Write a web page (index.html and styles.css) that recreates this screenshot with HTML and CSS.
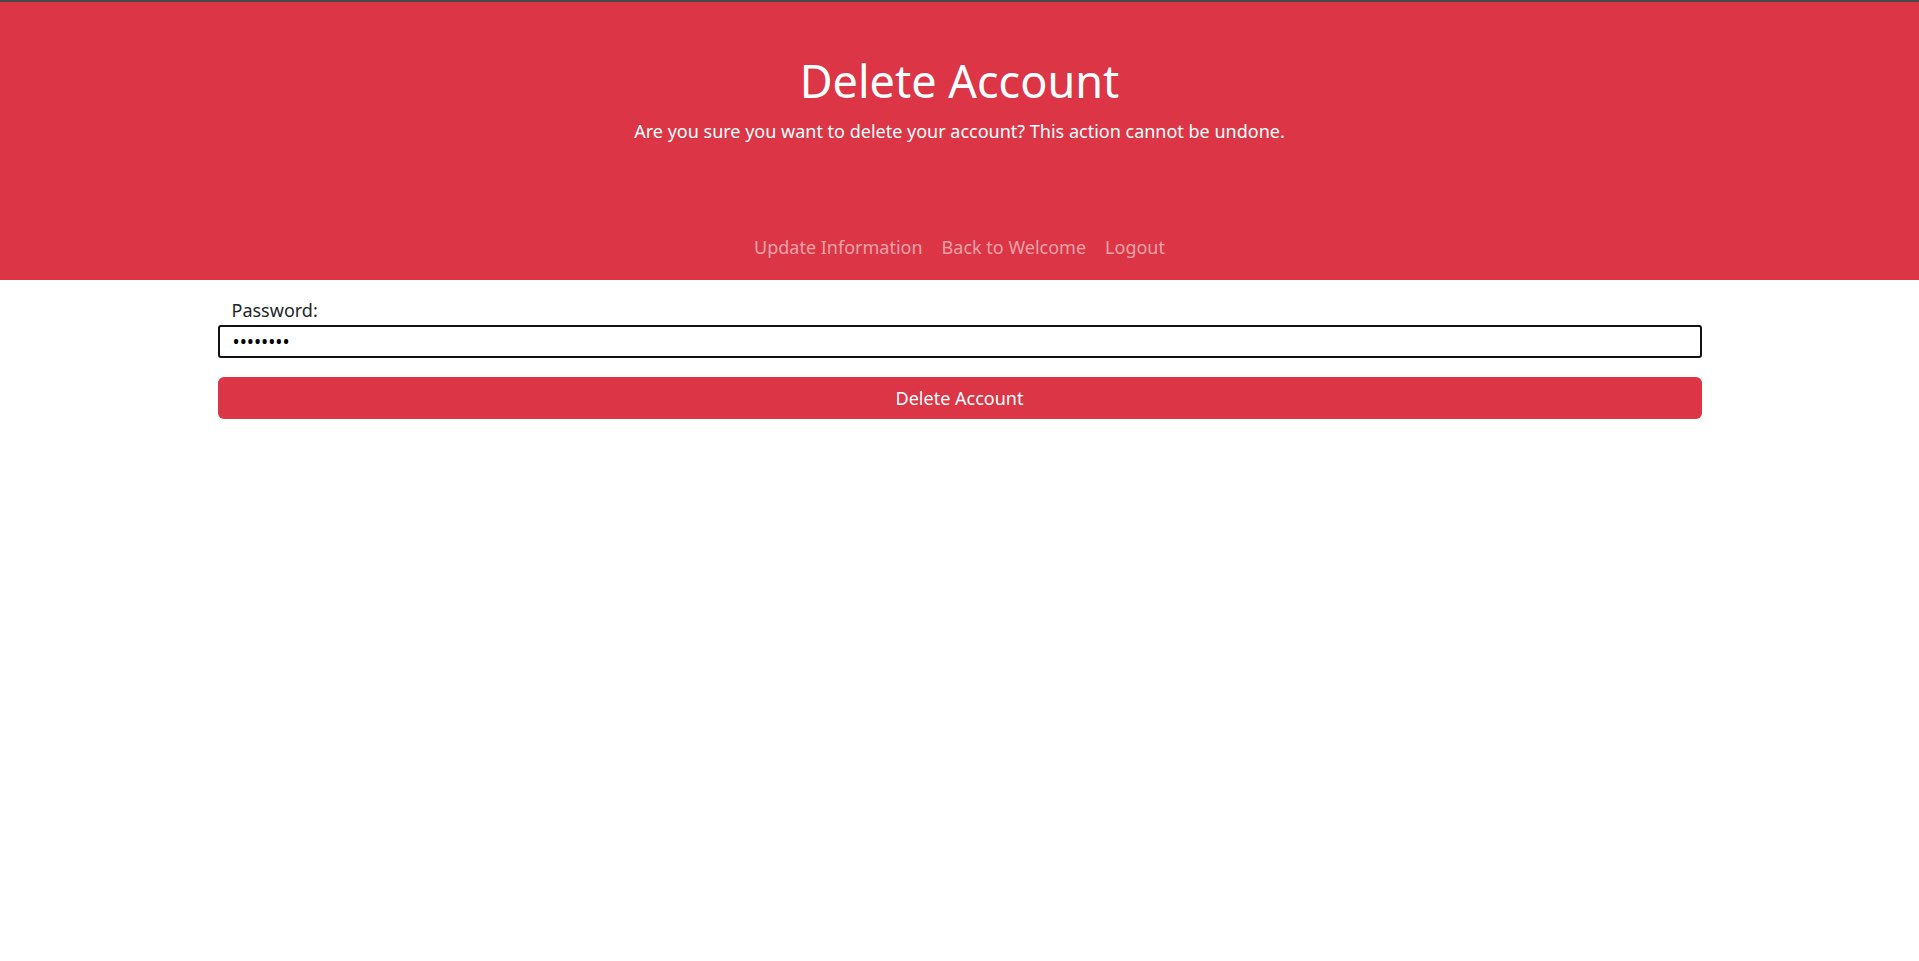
FILE: index.html
```html
<!DOCTYPE html>
<html lang="en">
<head>
<meta charset="utf-8">
<title>Delete Account</title>
<link rel="stylesheet" href="styles.css">
</head>
<body>
<header class="hero">
  <h1 class="hero-title">Delete Account</h1>
  <p class="hero-sub">Are you sure you want to delete your account? This action cannot be undone.</p>
  <nav class="hero-nav">
    <a href="#" class="nav-link">Update Information</a>
    <a href="#" class="nav-link">Back to Welcome</a>
    <a href="#" class="nav-link">Logout</a>
  </nav>
</header>
<main class="container">
  <form class="delete-form">
    <label class="field-label" for="pw">Password:</label>
    <input class="field-input" id="pw" type="password" value="password">
    <button class="btn-danger" type="button">Delete Account</button>
  </form>
</main>
</body>
</html>
```
FILE: styles.css
```css
* { box-sizing: border-box; }
html, body { margin: 0; padding: 0; }
body {
  font-family: "Noto Sans", "Open Sans", sans-serif;
  font-size: 18px;
  line-height: 27px;
  color: #212529;
  background: #fff;
}
.hero {
  background: #dc3545;
  border-top: 2px solid #484848;
  color: #fff;
  text-align: center;
  padding-top: 52px;
  height: 280px;
}
.hero-title {
  margin: 0;
  font-size: 45px;
  line-height: 54px;
  font-weight: 400;
}
.hero-sub {
  margin: 10px 0 0;
  font-size: 18px;
  line-height: 27px;
}
.hero-nav {
  margin-top: 89px;
  display: flex;
  justify-content: center;
  gap: 19px;
}
.nav-link {
  color: rgba(255, 255, 255, 0.55);
  text-decoration: none;
  font-size: 18px;
  line-height: 27px;
}
.container {
  width: 1484px;
  margin: 0 auto;
}
.delete-form {
  display: flex;
  flex-direction: column;
  padding-top: 17px;
}
.field-label {
  padding-left: 14px;
  font-size: 18px;
  line-height: 27px;
  color: #212529;
  margin-bottom: 1px;
}
.field-input {
  height: 33px;
  border: 2px solid #111;
  border-radius: 3px;
  padding: 0 13px;
  font-family: "Noto Sans", sans-serif;
  font-size: 19px;
  color: #000;
  background: #fff;
}
.btn-danger {
  margin-top: 19px;
  height: 42px;
  border: none;
  border-radius: 6px;
  background: #dc3545;
  color: #fff;
  font-family: "Noto Sans", "Open Sans", sans-serif;
  font-size: 18px;
  line-height: 27px;
  cursor: pointer;
}
```
